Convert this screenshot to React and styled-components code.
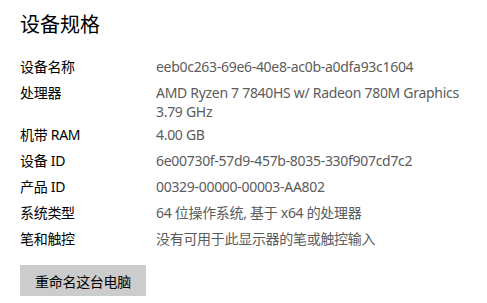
import React from 'react';
import styled, { createGlobalStyle } from 'styled-components';

const GlobalStyle = createGlobalStyle`
  html, body {
    margin: 0;
    padding: 0;
    background: #ffffff;
  }
  body {
    font-family: 'Segoe UI', 'Noto Sans', 'Noto Sans CJK SC', sans-serif;
  }
`;

const Page = styled.div`
  width: 487px;
  height: 303px;
  box-sizing: border-box;
  padding: 11px 20px 0 20px;
  overflow: hidden;
  background: #ffffff;
`;

const Title = styled.h1`
  margin: 0 0 18px 0;
  font-size: 20px;
  font-weight: 400;
  line-height: 28px;
  color: #000000;
`;

const SpecList = styled.div`
  display: flex;
  flex-direction: column;
  gap: 7px;
`;

const SpecRow = styled.div`
  display: grid;
  grid-template-columns: 136px 1fr;
  font-size: 14px;
  line-height: 19px;
  letter-spacing: -0.3px;
  white-space: nowrap;
  margin-bottom: ${(p) => (p.$multiline ? '-3px' : '0')};
`;

const Label = styled.span`
  color: #000000;
`;

const Value = styled.span`
  color: #5c5c5c;
`;

const RenameButton = styled.button`
  margin-top: 17px;
  width: 126px;
  height: 31px;
  border: none;
  background: #cccccc;
  color: #000000;
  font-family: inherit;
  font-size: 14px;
  letter-spacing: -0.3px;
  padding: 0;
  cursor: pointer;
`;

const specs = [
  ['设备名称', 'eeb0c263-69e6-40e8-ac0b-a0dfa93c1604'],
  ['处理器', 'AMD Ryzen 7 7840HS w/ Radeon 780M Graphics\n3.79 GHz'],
  ['机带 RAM', '4.00 GB'],
  ['设备 ID', '6e00730f-57d9-457b-8035-330f907cd7c2'],
  ['产品 ID', '00329-00000-00003-AA802'],
  ['系统类型', '64 位操作系统, 基于 x64 的处理器'],
  ['笔和触控', '没有可用于此显示器的笔或触控输入'],
];

export default function App() {
  return (
    <>
      <GlobalStyle />
      <Page>
        <Title>设备规格</Title>
        <SpecList>
          {specs.map(([label, value]) => {
            const lines = value.split('\n');
            return (
              <SpecRow key={label} $multiline={lines.length > 1}>
                <Label>{label}</Label>
                <Value>
                  {lines.map((line) => (
                    <div key={line}>{line}</div>
                  ))}
                </Value>
              </SpecRow>
            );
          })}
        </SpecList>
        <RenameButton>重命名这台电脑</RenameButton>
      </Page>
    </>
  );
}
